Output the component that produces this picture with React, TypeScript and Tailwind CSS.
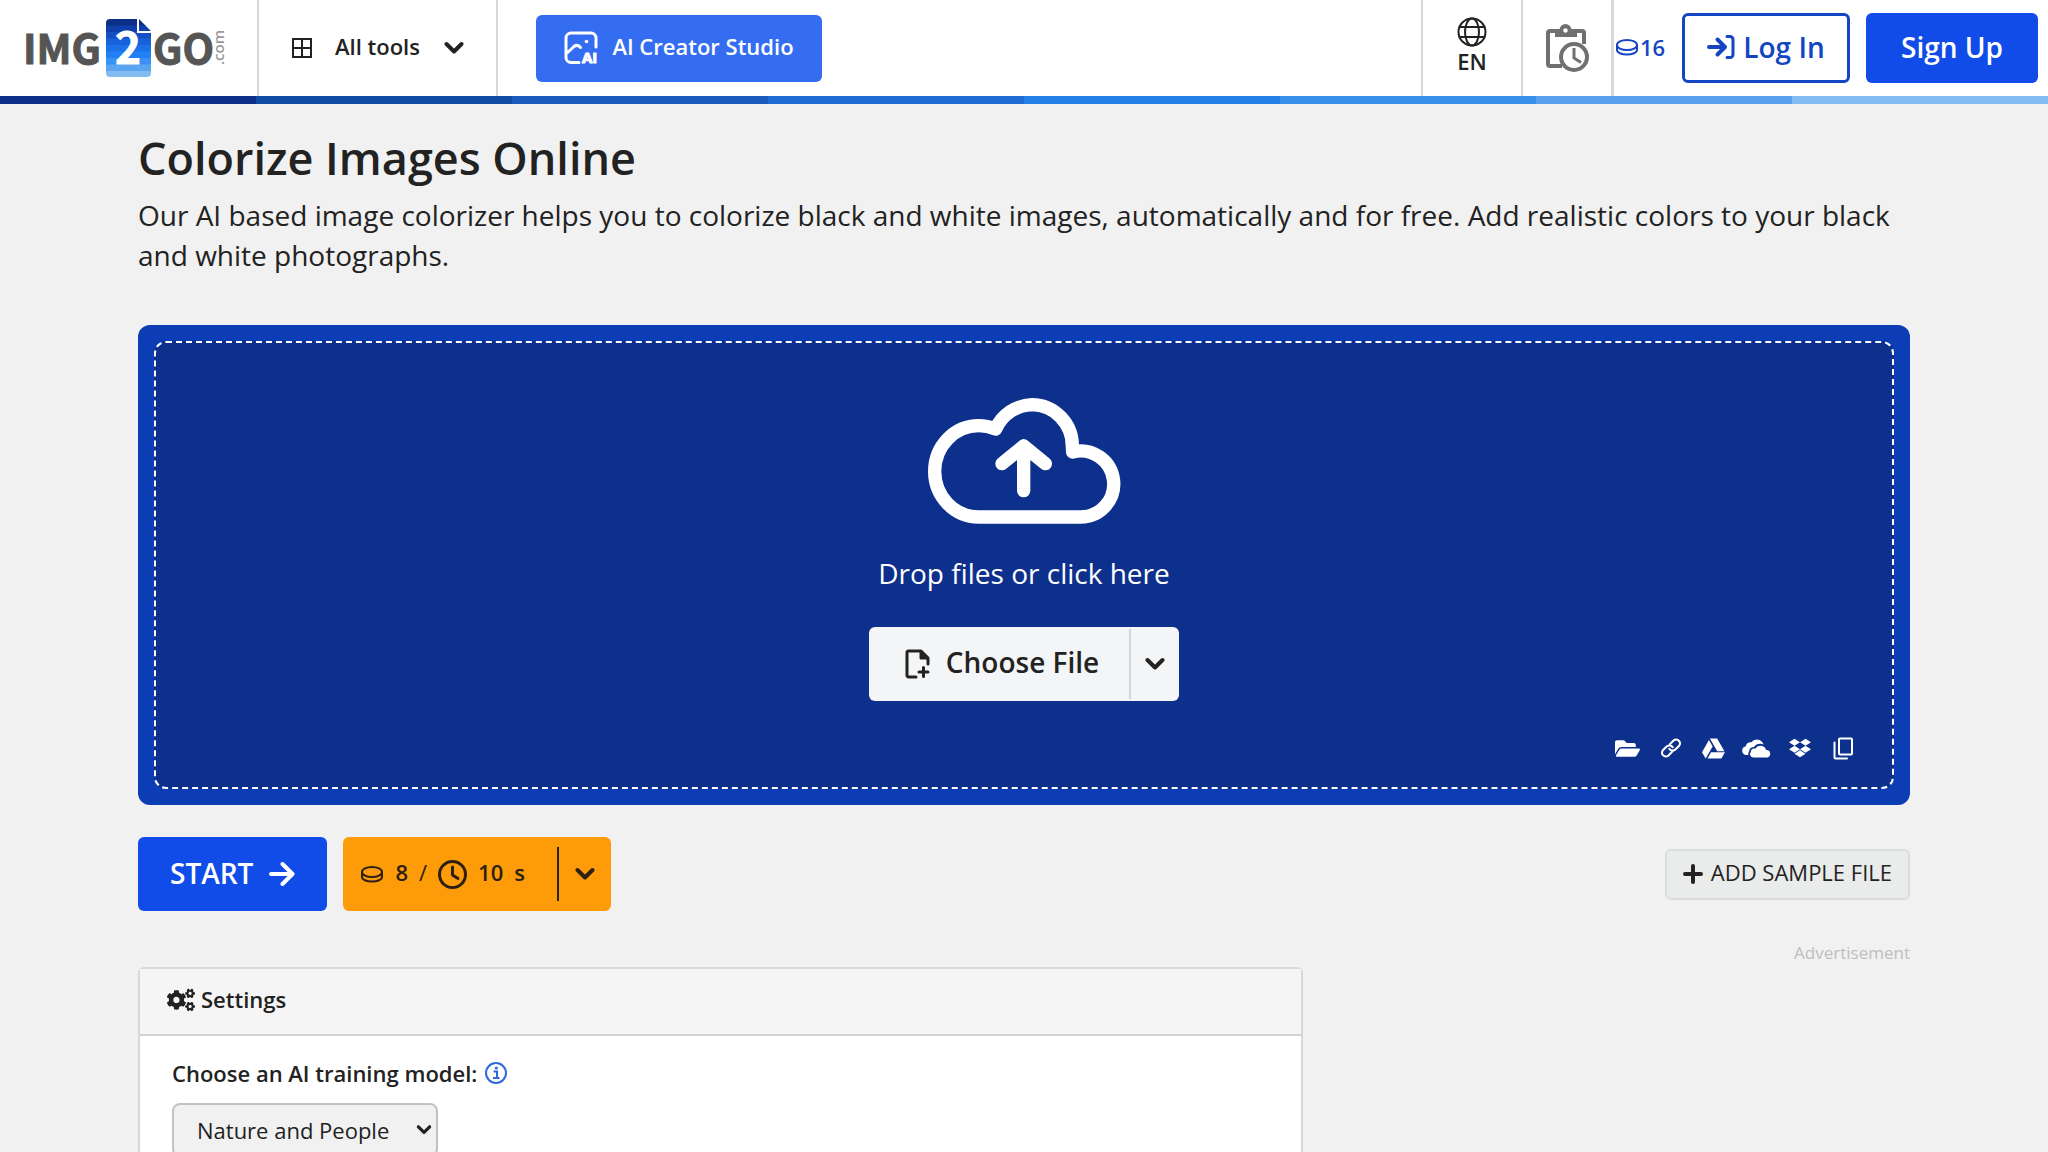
import type { ReactNode } from "react";
import { FaCogs, FaDropbox, FaFolderOpen, FaGoogleDrive } from "react-icons/fa";

const stripes = [
  "bg-[#0c3088]",
  "bg-[#124ba5]",
  "bg-[#195cbd]",
  "bg-[#1f6dd3]",
  "bg-[#247fe5]",
  "bg-[#398fe9]",
  "bg-[#5aa1ed]",
  "bg-[#80bbf2]",
];

const logoBands = ["#0c3088", "#0f3fa8", "#1450c4", "#1762d8", "#1b72e8", "#2080f4", "#3b92f6", "#5ba4f0", "#82bbf2"];

function Logo() {
  return (
    <svg width="212" height="64" viewBox="0 0 212 64" role="img" aria-label="IMG2GO.com" className="overflow-visible">
      <defs>
        <clipPath id="sheet">
          <path d="M84 5h33l12 12v42a4 4 0 0 1-4 4H88a4 4 0 0 1-4-4V9a4 4 0 0 1 4-4z" />
        </clipPath>
      </defs>
      <g fontFamily="'Noto Sans CJK SC', sans-serif" fontWeight="700" fontSize="41" fill="#555555" stroke="#555555" strokeWidth="1">
        <text x="1" y="50">IMG</text>
        <text x="131" y="50">GO</text>
      </g>
      <g clipPath="url(#sheet)">
        {logoBands.map((c, i) => (
          <rect key={c} x="82" y={5 + i * 6.5} width="50" height="7" fill={c} />
        ))}
      </g>
      <path d="M116 4v14h14" fill="none" stroke="#fff" strokeWidth="2" />
      <text x="106" y="50" textAnchor="middle" fontFamily="'Noto Sans CJK SC', sans-serif" fontWeight="700" fontSize="44" fill="#fff" stroke="#fff" strokeWidth="1">
        2
      </text>
      <text x="0" y="0" transform="translate(202 51) rotate(-90)" fontFamily="'Open Sans', sans-serif" fontSize="15" fontWeight="600" fill="#9a9a9a">
        .com
      </text>
    </svg>
  );
}

type StrokeProps = { w: number; h: number; box: string; sw: number; children: ReactNode; round?: boolean };

function Stroke({ w, h, box, sw, children, round = true }: StrokeProps) {
  return (
    <svg
      width={w}
      height={h}
      viewBox={box}
      fill="none"
      stroke="currentColor"
      strokeWidth={sw}
      strokeLinecap={round ? "round" : "butt"}
      strokeLinejoin={round ? "round" : "miter"}
      aria-hidden="true"
      className="shrink-0"
    >
      {children}
    </svg>
  );
}

const Chevron = () => (
  <Stroke w={20} h={14} box="0 0 20 14" sw={4}>
    <path d="M2.500 3l7.500 7.500L17.500 3" />
  </Stroke>
);

const Coin = () => (
  <Stroke w={22} h={18} box="0 0 22 18" sw={2}>
    <ellipse cx="11" cy="7" rx="10" ry="5" />
    <path d="M1 7v5c0 2.600 4.500 4.500 10 4.500s10-1.900 10-4.500V7" />
  </Stroke>
);

const Globe = () => (
  <Stroke w={30} h={30} box="0 0 30 30" sw={2}>
    <circle cx="15" cy="15" r="13.500" />
    <ellipse cx="15" cy="15" rx="7" ry="13.500" />
    <path d="M2.500 10h25M2.500 20h25" />
  </Stroke>
);

const ClipboardClock = () => (
  <Stroke w={44} h={48} box="0 0 44 48" sw={4} round={false}>
    <path d="M17 42H5a2 2 0 0 1-2-2V9a2 2 0 0 1 2-2h32a2 2 0 0 1 2 2v11" />
    <path d="M10 7h22v6H10z" fill="currentColor" stroke="none" />
    <circle cx="20.500" cy="6" r="6" fill="currentColor" stroke="none" />
    <circle cx="20.500" cy="6.500" r="2.200" fill="#fff" stroke="none" />
    <circle cx="29" cy="33" r="13" fill="#fff" />
    <path d="M29 24v10l7 4.500" strokeWidth="3" />
  </Stroke>
);

const ImageAi = () => (
  <svg width="34" height="34" viewBox="0 0 34 34" fill="none" stroke="currentColor" strokeWidth="3" strokeLinecap="round" strokeLinejoin="round" aria-hidden="true" className="overflow-visible">
    <path d="M15 31.500H7a5 5 0 0 1-5-5V7a5 5 0 0 1 5-5h20a5 5 0 0 1 5 5v9M3 22l7-6.500c1.800-1.500 3.500-1.500 5.500 0l1 1" />
    <circle cx="22.500" cy="10.500" r="1.800" fill="currentColor" stroke="none" />
    <text x="18" y="32" fontFamily="'Open Sans', sans-serif" fontWeight="700" fontSize="15" fill="currentColor" stroke="currentColor" strokeWidth="1">
      AI
    </text>
  </svg>
);

const sources: { label: string; icon: ReactNode }[] = [
  { label: "From computer", icon: <FaFolderOpen size={25} /> },
  {
    label: "From URL",
    icon: (
      <Stroke w={20} h={20} box="0 0 24 24" sw={2.5}>
        <path d="M10 13a5 5 0 0 0 7.540.540l4-4a4.600 4.600 0 0 0-6.500-6.500l-4.600 4.600" />
        <path d="M14 11a5 5 0 0 0-7.540-.540l-4 4a4.600 4.600 0 0 0 6.500 6.500l4.600-4.600" />
      </Stroke>
    ),
  },
  { label: "Google Drive", icon: <FaGoogleDrive size={23} /> },
  {
    label: "OneDrive",
    icon: (
      <svg width="29" height="19" viewBox="0 0 29 19" fill="currentColor" aria-hidden="true">
        <path d="M6.500 16H4.300A4.300 4.300 0 0 1 3.600 7.500 5.400 5.400 0 0 1 9.300 3.200 7 7 0 0 1 21.500 5.600a7.500 7.500 0 0 0-3.500-.8A7.600 7.600 0 0 0 12 8C9 8 7.200 10 7.200 12.200c-.9 1-1.200 2.500-.7 3.800z" />
        <path d="M11.500 18.500a3.400 3.400 0 0 1-2.600-5.700c0-2.400 2-3.800 4.300-3.100a6 6 0 0 1 10.900 1.300 3.800 3.800 0 0 1 1.100 7.500z" />
      </svg>
    ),
  },
  { label: "Dropbox", icon: <FaDropbox size={22} /> },
  {
    label: "Paste",
    icon: (
      <Stroke w={20} h={23} box="0 0 20 23" sw={2}>
        <rect x="6" y="1.500" width="13" height="16" rx="1" />
        <path d="M1.500 5.500v15a1 1 0 0 0 1 1H14" />
      </Stroke>
    ),
  },
];

function Header() {
  return (
    <header className="bg-white">
      <div className="flex h-24 items-stretch justify-between">
        <div className="flex items-stretch">
          <a href="#home" className="flex w-[259px] items-center border-r-2 border-[#d3dadd] pb-1 pl-[22px]">
            <Logo />
          </a>
          <button type="button" className="flex w-[239px] items-center border-r-2 border-[#d3dadd] pl-8 text-[22px] font-semibold">
            <Stroke w={22} h={22} box="0 0 22 22" sw={2} round={false}>
              <path d="M2 2h18v18H2zM11 2v18M2 11h18" />
            </Stroke>
            <span className="mr-6 ml-[22px] pb-1">All tools</span>
            <Chevron />
          </button>
          <a href="#studio" className="ml-[38px] flex h-[67px] w-[286px] items-center justify-center gap-3.5 self-center rounded-md bg-[#346df1] text-[22px] font-semibold text-white">
            <ImageAi />
            <span className="pb-1">AI Creator Studio</span>
          </a>
        </div>
        <div className="flex items-stretch">
          <button type="button" className="flex w-[100px] flex-col items-center border-l-2 border-[#d3dadd] pt-[17px] text-[22px] leading-7 font-semibold">
            <Globe />
            EN
          </button>
          <button type="button" aria-label="History" className="flex w-[93px] items-center justify-center border-r-3 border-l-2 border-[#d3dadd] text-[#707070]">
            <ClipboardClock />
          </button>
          <a href="#credits" className="flex w-[68px] items-center gap-0.5 pb-0.5 pl-0.5 text-[22px] font-semibold text-[#1446c2]">
            <Coin />
            16
          </a>
          <a href="#login" className="flex h-[70px] w-[168px] items-center justify-center gap-2 self-center rounded-md border-3 border-[#1446c2] pb-0.5 text-[28px] font-semibold text-[#1446c2]">
            <Stroke w={28} h={26} box="0 0 28 26" sw={4}>
              <path d="M2 13h14M10.500 5.500L18 13l-7.500 7.500" />
              <path d="M20 2.500h3a3 3 0 0 1 3 3v15a3 3 0 0 1-3 3h-3" strokeWidth="3" />
            </Stroke>
            Log In
          </a>
          <a href="#signup" className="mr-2.5 ml-4 flex h-[70px] w-[172px] items-center justify-center self-center rounded-md bg-[#114ce8] pb-0.5 text-[28px] font-semibold text-white">
            Sign Up
          </a>
        </div>
      </div>
      <div className="flex h-2">
        {stripes.map((c) => (
          <div key={c} className={`flex-1 ${c}`} />
        ))}
      </div>
    </header>
  );
}

function DropZone() {
  return (
    <section className="mt-[50px] rounded-xl bg-[#0c3db4] p-4">
      <div className="flex flex-col items-center rounded-xl border-2 border-dashed border-white bg-[#0d308c] px-9 pt-[55px] pb-6 text-white">
        <svg width="192" height="126" viewBox="234 83 576 378" fill="none" stroke="#fff" strokeWidth="40" strokeLinecap="round" strokeLinejoin="round" aria-hidden="true" className="overflow-visible">
          <path d="M386 440A132 137 0 0 1 386 166Q412 166 437 176A123 123 0 0 1 546 103A122 124 0 0 1 667 228L668 245A99 99 0 1 1 691 440Z" />
          <path d="M521 361V227M456 280l65-53 65 53" />
        </svg>
        <p className="mt-[29px] text-[28px] leading-10">Drop files or click here</p>
        <div className="mt-[34px] flex h-[74px] items-center rounded-md bg-[#f4f5f7] text-[#222222]">
          <button type="button" className="flex h-full items-center gap-4 pr-[30px] pl-9 text-[28px] font-semibold">
            <Stroke w={25} h={30} box="0 0 25 30" sw={3}>
              <path d="M11 28H3.500A1.500 1.500 0 0 1 2 26.500v-23A1.500 1.500 0 0 1 3.500 2H16l7 7v6" />
              <path d="M16 2.500V9h6.500z" fill="currentColor" />
              <path d="M18.500 18.500v9M14 23h9" />
            </Stroke>
            <span className="pb-1">Choose File</span>
          </button>
          <button type="button" aria-label="More sources" className="flex h-[70px] w-[50px] items-center justify-center border-l-2 border-[#d3d6d8]">
            <Chevron />
          </button>
        </div>
        <div className="mt-[34px] -mr-2 grid h-[26px] grid-cols-[repeat(6,43px)] justify-items-center self-end mb-0.5">
          {sources.map((s) => (
            <button key={s.label} type="button" aria-label={s.label} className="flex h-[26px] items-center">
              {s.icon}
            </button>
          ))}
        </div>
      </div>
    </section>
  );
}

function Actions() {
  return (
    <div className="mt-8 flex items-center gap-4">
      <button type="button" className="flex h-[74px] items-center gap-4 rounded-md bg-[#114ce8] px-8 text-[28px] font-semibold text-white">
        <span className="pb-0.5">START</span>
        <Stroke w={26} h={26} box="0 0 26 26" sw={4}>
          <path d="M2 13h21M13.500 3l10 10-10 10" />
        </Stroke>
      </button>
      <div className="flex h-[74px] items-center rounded-md bg-[#fd9b09] text-[22px] font-semibold text-[#2c2013]">
        <div className="flex items-center pl-[18px]">
          <Coin />
          <span className="ml-3 pb-1">8</span>
          <span className="mx-[11px] pb-1 font-normal">/</span>
          <Stroke w={29} h={29} box="0 0 29 29" sw={3}>
            <circle cx="14.500" cy="14.500" r="13" />
            <path d="M14.500 7v8l5.500 3.500" />
          </Stroke>
          <span className="ml-[11px] pb-1">10</span>
          <span className="mr-8 ml-[11px] pb-1">s</span>
        </div>
        <button type="button" aria-label="Processing details" className="flex h-[54px] w-[54px] items-center justify-center border-l-2 border-[#2c2013]">
          <Chevron />
        </button>
      </div>
      <button type="button" className="ml-auto flex h-[51px] items-center gap-2 rounded-md border-2 border-[#dadddd] bg-[#eaebeb] px-4 text-[22px] text-[#222222]">
        <Stroke w={20} h={20} box="0 0 20 20" sw={4}>
          <path d="M2 10h16M10 2v16" />
        </Stroke>
        <span className="pb-1">ADD SAMPLE FILE</span>
      </button>
    </div>
  );
}

function Settings() {
  return (
    <section className="rounded-t-md border-2 border-[#d8d8d8] bg-white">
      <h2 className="flex h-[67px] items-center gap-1.5 border-b-2 border-[#d2d2d2] bg-[#f5f5f5] px-[27px] pb-1 text-[22px] font-semibold">
        <FaCogs size={28} />
        Settings
      </h2>
      <div className="px-8 pt-[19px] pb-8">
        <div className="flex items-center gap-2 text-[22px] leading-9 font-semibold">
          <label htmlFor="model">Choose an AI training model:</label>
          <svg width="22" height="22" viewBox="0 0 22 22" className="text-[#2f68dc]" fill="none" stroke="currentColor" strokeWidth="2" aria-hidden="true">
            <circle cx="11" cy="11" r="10" />
            <path d="M8.500 9.500H12V16M8 16h6.500" />
            <circle cx="11.300" cy="6" r="1.600" fill="currentColor" stroke="none" />
          </svg>
        </div>
        <div className="mt-3 grid w-[266px]">
          <select id="model" className="col-start-1 row-start-1 h-[54px] appearance-none rounded-lg border-2 border-[#c2c2c2] bg-[#f1f1f1] pl-[23px] text-[22px]">
            <option>Nature and People</option>
            <option>Artistic</option>
          </select>
          <span className="pointer-events-none col-start-1 row-start-1 mr-1.5 self-center justify-self-end">
            <Stroke w={16} h={12} box="0 0 20 14" sw={4}>
              <path d="M3 3l7 7 7-7" />
            </Stroke>
          </span>
        </div>
      </div>
    </section>
  );
}

export default function App() {
  return (
    <div className="min-h-screen bg-[#f1f1f1] font-['Open_Sans',sans-serif] text-[#222222]">
      <Header />
      <main className="mx-auto max-w-[1772px] pt-[27px]">
        <h1 className="text-[45px] leading-[54px] font-semibold">Colorize Images Online</h1>
        <p className="mt-2.5 text-[28px] leading-10">
          Our AI based image colorizer helps you to colorize black and white images, automatically and for free. Add realistic colors to your black and white photographs.
        </p>
        <DropZone />
        <Actions />
        <div className="mt-7 flex items-start">
          <div className="w-2/3 pt-7 pr-4">
            <Settings />
          </div>
          <p className="w-1/3 text-right text-[17px] leading-7 text-[#bebebe]">Advertisement</p>
        </div>
      </main>
    </div>
  );
}
